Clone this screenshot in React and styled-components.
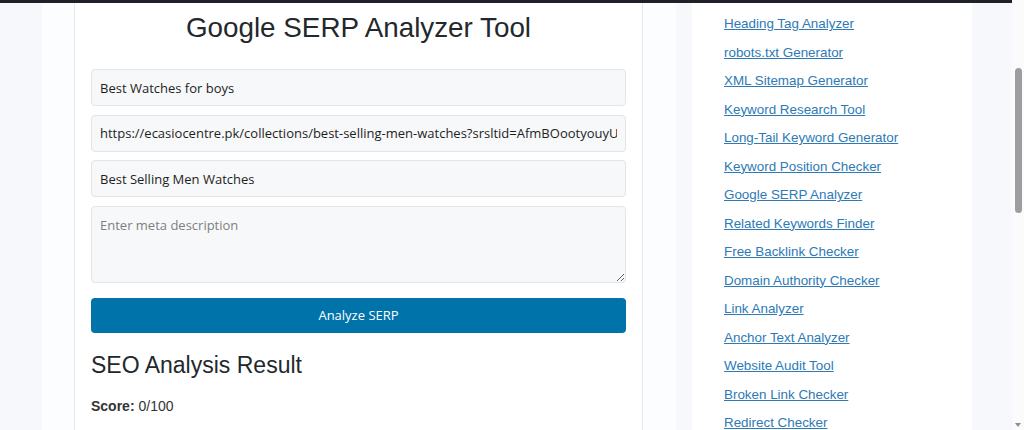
import React from "react";
import styled, { createGlobalStyle } from "styled-components";

const GlobalStyle = createGlobalStyle`
  html, body {
    margin: 0;
    padding: 0;
    height: 100%;
    overflow: hidden;
    background: #f7f8fc;
    font-family: "Liberation Sans", Arial, sans-serif;
  }
  * { box-sizing: border-box; }
`;

const Page = styled.div`
  width: calc(100vw - 12px);
  height: 100vh;
  display: flex;
  flex-direction: column;
`;

const TopBar = styled.div`
  height: 3px;
  background: #1e2128;
  flex-shrink: 0;
`;

const Layout = styled.div`
  flex: 1;
  display: flex;
  padding-left: 42px;
  gap: 16px;
  min-height: 0;
`;

const MainColumn = styled.div`
  width: 634px;
  padding: 0 33px 0 32px;
  background: #fcfdfe;
  display: flex;
`;

const Card = styled.div`
  flex: 1;
  background: #ffffff;
  border-left: 1px solid #e6e7ea;
  border-right: 1px solid #e6e7ea;
  padding: 0 16px;
`;

const Title = styled.h1`
  margin: 8px 0 24px;
  font-size: 27.8px;
  line-height: 34px;
  font-weight: 400;
  color: #23282d;
  text-align: center;
`;

const Form = styled.form`
  display: flex;
  flex-direction: column;
  gap: 8.5px;
`;

const fieldStyles = `
  width: 100%;
  background: #f7f8f9;
  border: 1px solid #e2e4e6;
  border-radius: 4px;
  padding: 0 8px;
  font-family: "Open Sans", "Noto Sans", sans-serif;
  font-size: 13px;
  color: #1e1e1e;
  outline: none;
`;

const Input = styled.input`
  ${fieldStyles}
  height: 37px;
`;

const TextArea = styled.textarea`
  ${fieldStyles}
  height: 77px;
  padding-top: 9px;
  resize: vertical;
  &::placeholder { color: #7d7f83; }
`;

const Button = styled.button`
  margin-top: 6.5px;
  height: 35px;
  width: 100%;
  border: none;
  border-radius: 4px;
  background: #0073aa;
  color: #ffffff;
  font-family: "Open Sans", "Noto Sans", sans-serif;
  font-size: 13px;
  cursor: pointer;
`;

const ResultHeading = styled.h2`
  margin: 17px 0 0;
  font-size: 23px;
  line-height: 30px;
  font-weight: 400;
  color: #23282d;
`;

const ScoreLine = styled.p`
  margin: 18px 0 0;
  font-size: 14px;
  color: #333;
`;

const Sidebar = styled.aside`
  width: 280px;
  background: #ffffff;
  padding: 11px 32px 0;
  display: flex;
  flex-direction: column;
  gap: 8.5px;
`;

const ToolLink = styled.a`
  display: block;
  font-size: 13.4px;
  line-height: 20px;
  color: #2d7ab6;
  text-decoration: underline;
  white-space: nowrap;
`;

const ScrollTrack = styled.div`
  position: fixed;
  top: 0;
  right: 0;
  width: 12px;
  height: 100vh;
  background: #fbfbfc;
`;

const ScrollThumb = styled.div`
  position: absolute;
  top: 68px;
  left: 3px;
  width: 7px;
  height: 145px;
  border-radius: 4px;
  background: #9d9d9f;
`;

const ScrollArrow = styled.div`
  position: absolute;
  bottom: 3px;
  left: 3px;
  width: 0;
  height: 0;
  border-left: 3.5px solid transparent;
  border-right: 3.5px solid transparent;
  border-top: 4px solid #8e8e90;
`;

const tools = [
  "Heading Tag Analyzer",
  "robots.txt Generator",
  "XML Sitemap Generator",
  "Keyword Research Tool",
  "Long-Tail Keyword Generator",
  "Keyword Position Checker",
  "Google SERP Analyzer",
  "Related Keywords Finder",
  "Free Backlink Checker",
  "Domain Authority Checker",
  "Link Analyzer",
  "Anchor Text Analyzer",
  "Website Audit Tool",
  "Broken Link Checker",
  "Redirect Checker",
];

const App = () => {
  return (
    <>
      <GlobalStyle />
      <Page>
        <TopBar />
        <Layout>
          <MainColumn>
            <Card>
              <Title>Google SERP Analyzer Tool</Title>
              <Form onSubmit={(e) => e.preventDefault()}>
                <Input defaultValue="Best Watches for boys" placeholder="Enter keyword" />
                <Input
                  defaultValue="https://ecasiocentre.pk/collections/best-selling-men-watches?srsltid=AfmBOootyouyUx2kLmQ"
                  placeholder="Enter URL"
                />
                <Input defaultValue="Best Selling Men Watches" placeholder="Enter meta title" />
                <TextArea placeholder="Enter meta description" />
                <Button type="submit">Analyze SERP</Button>
              </Form>
              <ResultHeading>SEO Analysis Result</ResultHeading>
              <ScoreLine>
                <strong>Score:</strong> 0/100
              </ScoreLine>
            </Card>
          </MainColumn>
          <Sidebar>
            {tools.map((t) => (
              <ToolLink key={t} href="#">
                {t}
              </ToolLink>
            ))}
          </Sidebar>
        </Layout>
      </Page>
      <ScrollTrack>
        <ScrollThumb />
        <ScrollArrow />
      </ScrollTrack>
    </>
  );
};

export default App;
